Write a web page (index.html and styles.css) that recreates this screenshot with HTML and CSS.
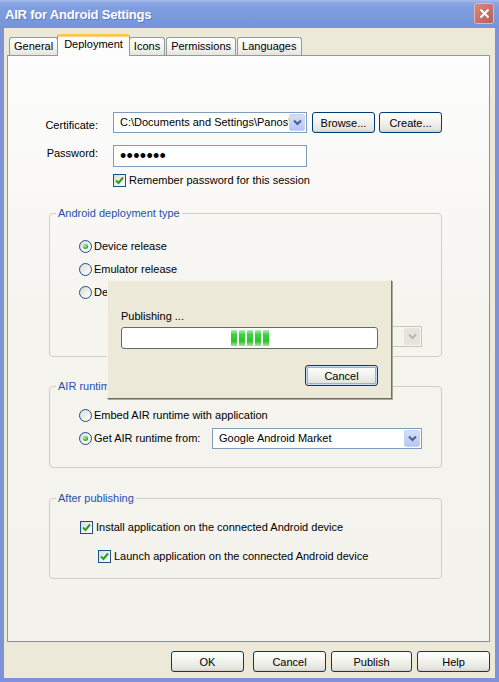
FILE: index.html
```html
<!DOCTYPE html>
<html lang="en">
<head>
  <meta charset="utf-8">
  <title>AIR for Android Settings</title>
  <link rel="stylesheet" href="styles.css">
</head>
<body>
  <div class="window">
    <div class="titlebar">
      <span class="title">AIR for Android Settings</span>
      <button class="close-btn" aria-label="Close">
        <svg width="11" height="11" viewBox="0 0 11 11"><path d="M1.5 1.5 L9.5 9.5 M9.5 1.5 L1.5 9.5" stroke="#fff" stroke-width="2"/></svg>
      </button>
    </div>

    <div class="client">
      <div class="tabs">
        <div class="tab">General</div>
        <div class="tab active">Deployment</div>
        <div class="tab">Icons</div>
        <div class="tab">Permissions</div>
        <div class="tab">Languages</div>
      </div>

      <div class="panel">
        <div class="field-row">
          <label class="field-label low">Certificate:</label>
          <div class="combo combo-cert">
            <span class="combo-text">C:\Documents and Settings\Panos'</span>
            <span class="combo-arrow"><svg width="9" height="7" viewBox="0 0 9 7"><path d="M1 1.5 L4.5 5 L8 1.5" fill="none" stroke="#4d6185" stroke-width="2"/></svg></span>
          </div>
          <button class="btn btn-small">Browse...</button>
          <button class="btn btn-small btn-next">Create...</button>
        </div>

        <div class="field-row row-password">
          <label class="field-label">Password:</label>
          <div class="textbox"><span class="dots">&bull;&bull;&bull;&bull;&bull;&bull;&bull;</span></div>
        </div>

        <div class="option option-remember">
          <span class="check"><svg width="9" height="9" viewBox="0 0 9 9"><path d="M1 4.5 L3.5 7 L8 1.5" fill="none" stroke="#21a121" stroke-width="2"/></svg></span>
          <span>Remember password for this session</span>
        </div>

        <fieldset class="group group-first">
          <legend>Android deployment type</legend>
          <div class="group-body body-deploy">
            <div class="option"><span class="radio checked"></span><span>Device release</span></div>
            <div class="option"><span class="radio"></span><span>Emulator release</span></div>
            <div class="option"><span class="radio"></span><span>Debug</span></div>
            <div class="option-sub">
              <div class="combo combo-wide disabled">
                <span class="combo-text"></span>
                <span class="combo-arrow"><svg width="9" height="7" viewBox="0 0 9 7"><path d="M1 1.5 L4.5 5 L8 1.5" fill="none" stroke="#b8b6ab" stroke-width="2"/></svg></span>
              </div>
            </div>
          </div>
        </fieldset>

        <fieldset class="group">
          <legend>AIR runtime</legend>
          <div class="group-body body-runtime">
            <div class="option"><span class="radio"></span><span>Embed AIR runtime with application</span></div>
            <div class="option option-combo">
              <span class="radio checked"></span><span>Get AIR runtime from:</span>
              <div class="combo combo-wide">
                <span class="combo-text">Google Android Market</span>
                <span class="combo-arrow"><svg width="9" height="7" viewBox="0 0 9 7"><path d="M1 1.5 L4.5 5 L8 1.5" fill="none" stroke="#4d6185" stroke-width="2"/></svg></span>
              </div>
            </div>
          </div>
        </fieldset>

        <fieldset class="group group-last">
          <legend>After publishing</legend>
          <div class="group-body body-after">
            <div class="option">
              <span class="check"><svg width="9" height="9" viewBox="0 0 9 9"><path d="M1 4.5 L3.5 7 L8 1.5" fill="none" stroke="#21a121" stroke-width="2"/></svg></span>
              <span>Install application on the connected Android device</span>
            </div>
            <div class="option option-nested">
              <span class="check"><svg width="9" height="9" viewBox="0 0 9 9"><path d="M1 4.5 L3.5 7 L8 1.5" fill="none" stroke="#21a121" stroke-width="2"/></svg></span>
              <span>Launch application on the connected Android device</span>
            </div>
          </div>
        </fieldset>
      </div>

      <div class="footer">
        <button class="btn btn-footer btn-ok">OK</button>
        <button class="btn btn-footer">Cancel</button>
        <button class="btn btn-footer btn-wide">Publish</button>
        <button class="btn btn-footer">Help</button>
      </div>
    </div>

    <!-- progress popup shown while publishing -->
    <div class="publish-dialog">
      <div class="publish-label">Publishing ...</div>
      <div class="progress">
        <span class="block"></span>
        <span class="block"></span>
        <span class="block"></span>
        <span class="block"></span>
        <span class="block"></span>
      </div>
      <div class="publish-actions">
        <button class="btn btn-footer btn-default">Cancel</button>
      </div>
    </div>
  </div>
</body>
</html>
```

FILE: styles.css
```css
* {
  margin: 0;
  padding: 0;
  box-sizing: border-box;
}

body {
  font-family: "Liberation Sans", Arial, sans-serif;
  font-size: 11px;
  line-height: 13px;
  color: #000;
  background: #ece9d8;
}

.window {
  position: relative;
  width: 499px;
  height: 682px;
  display: flex;
  flex-direction: column;
  background: #7d93d6;
}

/* title bar */
.titlebar {
  height: 28px;
  display: flex;
  align-items: flex-start;
  justify-content: space-between;
  padding: 0 5px;
  background: linear-gradient(to bottom, #a7beed 0, #8ba8e4 3px, #7f9ddf 8px, #7b99dd 60%, #7593d9 100%);
}

.title {
  margin-top: 8px;
  color: #fff;
  font-size: 13px;
  line-height: 14px;
  font-weight: bold;
  letter-spacing: -0.2px;
  text-shadow: 1px 1px 0 rgba(40, 60, 140, 0.35);
}

.close-btn {
  margin-top: 3px;
  width: 20px;
  height: 21px;
  border: 1px solid #e4b6b0;
  border-radius: 3px;
  background: linear-gradient(135deg, #d68a82, #c76d66 60%, #bb6159);
  display: flex;
  align-items: center;
  justify-content: center;
}

/* client area */
.client {
  flex: 1;
  margin: 0 4px 4px;
  padding: 6px 5px 0 3px;
  background: #ece9d8;
  display: flex;
  flex-direction: column;
}

.tabs {
  display: flex;
  align-items: flex-end;
  gap: 1px;
  height: 21px;
  padding-left: 2px;
  position: relative;
  z-index: 1;
}

.tab {
  height: 18px;
  padding: 0 4px;
  border: 1px solid #919b9c;
  border-bottom: none;
  border-radius: 3px 3px 0 0;
  background: linear-gradient(#ffffff, #f3f3ef 60%, #e4e3dc);
  line-height: 17px;
}

.tab.active {
  height: 22px;
  margin: 0 -2px -1px;
  padding: 0 6px;
  border-top: 2px solid #ffc73c;
  box-shadow: inset 0 1px 0 #f9d580;
  background: #fcfcfb;
  line-height: 17px;
  position: relative;
}

.panel {
  height: 587px;
  border: 1px solid #919b9c;
  border-right-color: #8a9092;
  border-bottom-color: #8a9092;
  background: linear-gradient(#fdfdfd, #f5f4ef 45%, #f3f2ec);
  padding-top: 56px;
}

/* certificate / password */
.field-row {
  display: flex;
  align-items: flex-start;
  height: 21px;
}

.field-label {
  width: 90px;
  margin-right: 15px;
  padding-top: 2px;
  text-align: right;
}

.field-label.low {
  padding-top: 7px;
}

.row-password {
  margin-top: 12px;
  height: 22px;
}

.combo {
  display: flex;
  align-items: center;
  height: 21px;
  border: 1px solid #7f9db9;
  background: #fff;
  padding: 1px;
}

.combo-cert {
  width: 194px;
}

.combo-text {
  flex: 1;
  padding-left: 5px;
  overflow: hidden;
  white-space: nowrap;
}

.combo-arrow {
  width: 16px;
  height: 17px;
  border: 1px solid #c6d4f7;
  border-radius: 2px;
  background: linear-gradient(#d4dffa, #b4c7f5);
  display: flex;
  align-items: center;
  justify-content: center;
}

.combo.disabled {
  border-color: #c9c7ba;
  background: #f5f4ea;
}

.combo.disabled .combo-arrow {
  border-color: #e8e6dc;
  background: #e6e4da;
}

.textbox {
  width: 194px;
  height: 22px;
  border: 1px solid #7f9db9;
  background: #fff;
  padding-left: 6px;
  display: flex;
  align-items: center;
}

.dots {
  font-size: 18px;
  letter-spacing: 0.3px;
}

/* buttons */
.btn {
  height: 21px;
  border: 1px solid #003c74;
  border-radius: 3px;
  background: linear-gradient(#ffffff, #f3f3ee 45%, #e6e5dd 85%, #d6d0c5);
  font-family: inherit;
  font-size: 11px;
  color: #000;
}

.btn-small {
  width: 63px;
  margin-left: 5px;
}

.btn-next {
  margin-left: 4px;
}

.btn-footer {
  width: 73px;
}

.btn-wide {
  width: 81px;
}

.btn-ok {
  margin-right: 4px;
}

.btn-default {
  box-shadow: inset 0 0 0 1px #c8dcfb, inset 0 0 0 2px #8fb1e6;
}

/* check boxes and radios */
.option {
  display: flex;
  align-items: center;
  gap: 2px;
  height: 13px;
}

.option-remember {
  margin-top: 7px;
  margin-left: 105px;
  gap: 3px;
}

.check {
  width: 13px;
  height: 13px;
  border: 1px solid #1c5180;
  background: linear-gradient(135deg, #dcdcd7, #ffffff);
  display: flex;
  align-items: center;
  justify-content: center;
}

.radio {
  width: 13px;
  height: 13px;
  border: 1px solid #1c5180;
  border-radius: 50%;
  background: linear-gradient(135deg, #dcdcd7, #ffffff);
  display: flex;
  align-items: center;
  justify-content: center;
}

.radio.checked::after {
  content: '';
  width: 5px;
  height: 5px;
  border-radius: 50%;
  background: radial-gradient(circle at 35% 35%, #b6ebb6, #21a121 75%);
}

/* group boxes */
.group {
  margin: 23px 47px 0 41px;
  border: 1px solid #d0d0bf;
  border-radius: 4px;
  min-width: 0;
}

.group-first {
  margin-top: 20px;
}

.group-last {
  margin-top: 24px;
}

.group legend {
  margin-left: 6px;
  padding: 0 2px;
  color: #1f50b0;
  line-height: 13px;
}

.body-deploy {
  padding: 20px 19px 9px 29px;
}

.body-deploy .option + .option {
  margin-top: 10px;
}

.option-sub {
  display: flex;
  margin-top: 27px;
}

.combo-wide {
  width: 210px;
  margin-left: auto;
}

.body-runtime {
  padding: 16px 19px 18px 29px;
}

.body-runtime .option-combo {
  height: 21px;
  margin-top: 6px;
}

.body-after {
  padding: 16px 19px 15px 30px;
}

.body-after .option {
  gap: 3px;
}

.body-after .option-nested {
  margin-top: 16px;
  margin-left: 18px;
}

/* footer */
.footer {
  display: flex;
  justify-content: flex-end;
  gap: 5px;
  margin-top: 9px;
}

/* publishing popup */
.publish-dialog {
  position: absolute;
  left: 107px;
  top: 280px;
  width: 285px;
  height: 119px;
  z-index: 2;
  background: #ece9d8;
  border: 1px solid;
  border-color: #f4f3ee #716f64 #716f64 #f4f3ee;
  box-shadow: 1px 1px 0 #aca899;
  padding: 29px 13px 0 13px;
}

.progress {
  margin-top: 4px;
  height: 22px;
  border: 1px solid #686868;
  border-radius: 3px;
  background: #fff;
  padding: 2px;
  display: flex;
  justify-content: center;
  gap: 2px;
}

.block {
  width: 6px;
  background: linear-gradient(#b3ecb3, #3bd23b 30%, #2bc42b 70%, #a3e6a3);
}

.publish-actions {
  display: flex;
  justify-content: flex-end;
  margin-top: 16px;
}
```
